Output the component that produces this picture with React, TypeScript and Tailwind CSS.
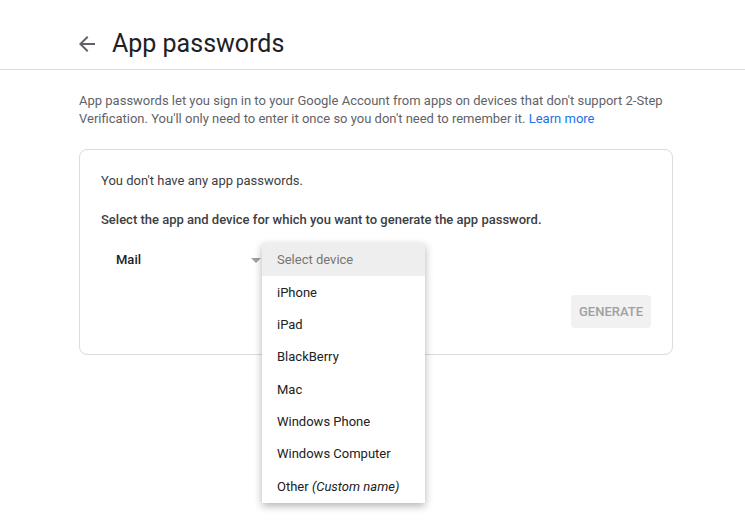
const DEVICES = ['iPhone', 'iPad', 'BlackBerry', 'Mac', 'Windows Phone', 'Windows Computer'];

export default function App() {
  return (
    <div className="min-h-[521px] bg-white text-[#202124]" style={{ fontFamily: 'Roboto, "Liberation Sans", sans-serif' }}>
      {/* ---- header ---- */}
      <header className="h-[70px] border-b border-[#dadce0] flex items-center pl-[75px] pt-[18px]">
        <svg viewBox="0 0 24 24" className="h-6 w-6 fill-[#5f6368]">
          <path d="M20 11H7.83l5.59-5.59L12 4l-8 8 8 8 1.41-1.41L7.83 13H20v-2z" />
        </svg>
        <h1 className="ml-[13px] text-[25px] leading-8 text-[#202124]">App passwords</h1>
      </header>

      <main className="pl-[79px] w-[673px]">
        <p className="mt-[22px] text-[13px] leading-[18px] text-[#5f6368]">
          App passwords let you sign in to your Google Account from apps on devices that don't support 2-Step
          Verification. You'll only need to enter it once so you don't need to remember it.{' '}
          <a className="text-[#1a73e8]">Learn more</a>
        </p>

        {/* ---- card ---- */}
        <section className="mt-[21px] h-[206px] border border-[#dadce0] rounded-lg px-[21px] pt-[22px] relative">
          <p className="text-[13px] leading-[18px] text-[#3c4043]">You don't have any app passwords.</p>
          <p className="mt-[21px] text-[13px] leading-[18px] font-medium text-[#3c4043]">
            Select the app and device for which you want to generate the app password.
          </p>

          <div className="mt-[22px] flex items-center h-[18px]">
            <div className="w-[160px] pl-[15px] flex items-center justify-between">
              <span className="text-[13px] font-medium text-[#202124]">Mail</span>
              <span className="w-0 h-0 border-x-[5px] border-x-transparent border-t-[5px] border-t-[#a0a0a0]" />
            </div>
          </div>

          <div className="mt-[26px] flex justify-end">
            <button className="h-[33px] px-[8px] rounded bg-[#f1f1f1] text-[13px] font-medium text-[#a0a0a0] uppercase">
              Generate
            </button>
          </div>

          {/* ---- open device menu ---- */}
          <div className="absolute left-[182px] top-[93px] w-[163px] bg-white shadow-[0_3px_8px_rgba(0,0,0,0.3)] pb-[1px] text-[13px]">
            <div className="h-[33px] flex items-center px-[15px] bg-[#eeeeee] text-[#757575]">Select device</div>
            {DEVICES.map((d) => (
              <div key={d} className="h-[32.3px] flex items-center px-[15px] pt-[1px] text-[#212121]">
                {d}
              </div>
            ))}
            <div className="h-[32.3px] flex items-center px-[15px] pt-[1px] text-[#212121]">
              Other&nbsp;<i>(Custom name)</i>
            </div>
          </div>
        </section>
      </main>
    </div>
  );
}
